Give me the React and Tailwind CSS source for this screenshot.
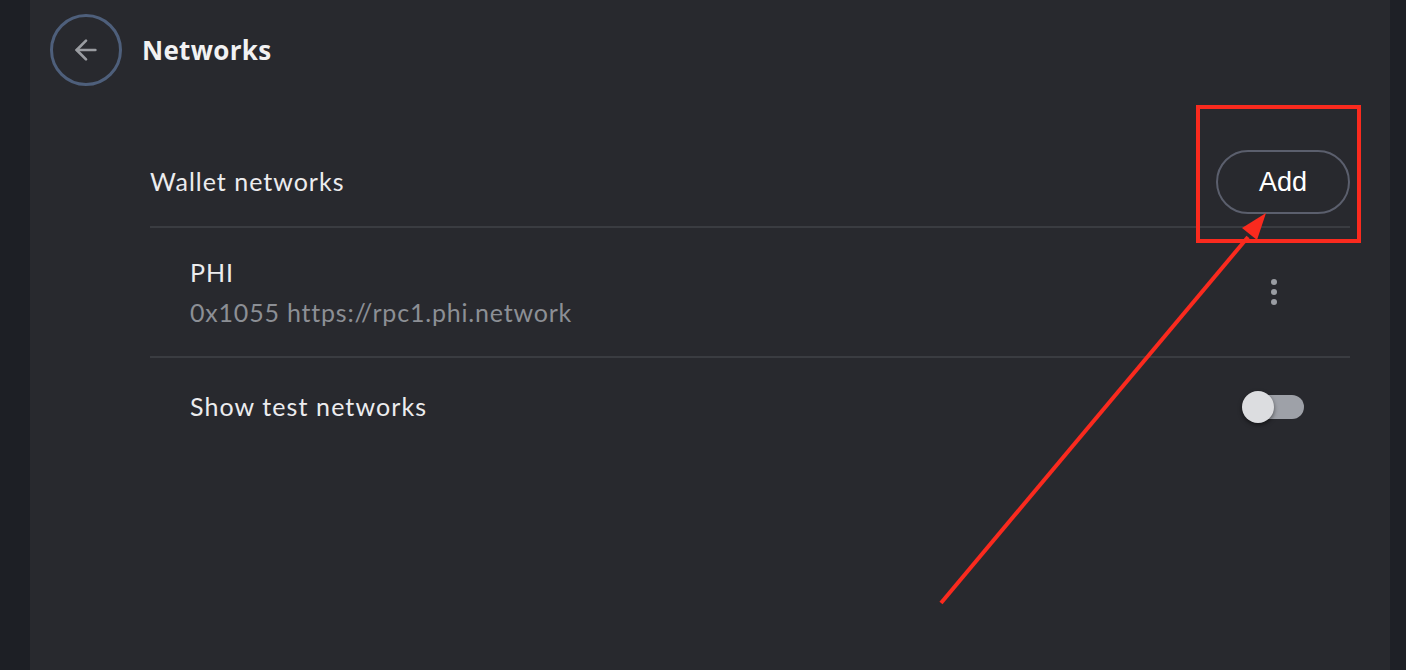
import React from 'react';

const font = { fontFamily: 'Lato, "Open Sans", sans-serif' };

const App = () => {
  return (
    <div className="relative flex h-[670px] w-[1406px] bg-[#1e2026] overflow-hidden" style={font}>
      {/* left strip */}
      <div className="w-[30px] shrink-0 bg-[#1d1f25]" />

      {/* main panel */}
      <div className="flex-1 bg-[#28292e] flex flex-col">
        {/* Header */}
        <div className="flex items-center gap-[20px] pl-[20px] pt-[14px]">
          <button className="w-[72px] h-[72px] rounded-full border-[3px] border-[#4e5f7b] flex items-center justify-center">
            <svg width="32" height="32" viewBox="0 0 24 24" fill="none" stroke="#9a9ca1" strokeWidth="2" strokeLinecap="round" strokeLinejoin="round">
              <path d="M19 12H5" />
              <path d="M12 19l-7-7 7-7" />
            </svg>
          </button>
          <h1 className="text-[26px] font-bold text-[#f2f2f3] tracking-[0.3px]" style={{ fontFamily: '"Open Sans", Inter, sans-serif' }}>
            Networks
          </h1>
        </div>

        {/* Content */}
        <div className="ml-[120px] mr-[40px] mt-[64px]">
          <div className="flex items-center justify-between h-[64px] mb-[12px]">
            <span className="text-[25px] tracking-[1px] text-[#ececee]">Wallet networks</span>
            <button className="w-[134px] h-[64px] rounded-full border-2 border-[#5b5f6d] text-[27px] text-white" style={{ fontFamily: '"Liberation Sans", Arial, sans-serif' }}>
              Add
            </button>
          </div>
          <div className="h-[2px] bg-[#3a3c41]" />

          <div className="flex items-center justify-between h-[128px] pl-[40px] pr-[73px]">
            <div className="flex flex-col gap-[10px]">
              <span className="text-[25px] leading-[30px] tracking-[1px] text-[#ececee]">PHI</span>
              <span className="text-[25px] leading-[30px] tracking-[0.8px] text-[#8c8f95]">0x1055 https://rpc1.phi.network</span>
            </div>
            <div className="flex flex-col gap-[4px]">
              <span className="w-[6px] h-[6px] rounded-full bg-[#9a9da3]" />
              <span className="w-[6px] h-[6px] rounded-full bg-[#9a9da3]" />
              <span className="w-[6px] h-[6px] rounded-full bg-[#9a9da3]" />
            </div>
          </div>
          <div className="h-[2px] bg-[#3a3c41]" />

          <div className="flex items-center justify-between h-[98px] pl-[40px] pr-[46px]">
            <span className="text-[25px] tracking-[1.1px] text-[#ececee]">Show test networks</span>
            <div className="relative w-[62px] h-[32px] flex items-center">
              <div className="absolute left-[4px] right-0 h-[24px] rounded-full bg-[#9ea1a8]" />
              <div className="absolute left-0 w-[32px] h-[32px] rounded-full bg-[#dcdde0] shadow-[0_2px_4px_rgba(0,0,0,0.5)]" />
            </div>
          </div>
        </div>
      </div>

      {/* right strip */}
      <div className="w-[16px] shrink-0 bg-[#1e2026]" />

      {/* annotation overlay */}
      <svg className="absolute inset-0 pointer-events-none" width="1406" height="670">
        <rect x="1198" y="107" width="161" height="134" fill="none" stroke="#fa2a1e" strokeWidth="4" />
        <line x1="941" y1="603" x2="1248" y2="237" stroke="#fa2a1e" strokeWidth="4" />
        <polygon points="1266,213 1242,228 1257,240" fill="#fa2a1e" />
      </svg>
    </div>
  );
};

export default App;
